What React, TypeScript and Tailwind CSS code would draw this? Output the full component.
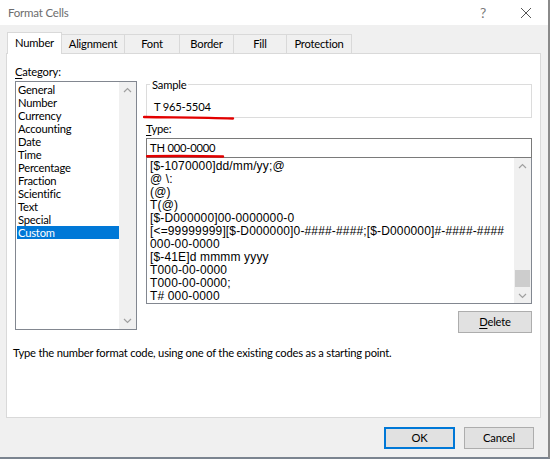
import React from 'react'

const font = { fontFamily: 'Lato, "Segoe UI", sans-serif', letterSpacing: '-0.2px' }

const tabs = ['Number', 'Alignment', 'Font', 'Border', 'Fill', 'Protection']
const tabWidths = ['w-[55px]', 'w-[63px]', 'w-[55px]', 'w-[54px]', 'w-[53px]', 'w-[65px]']

const categories = ['General', 'Number', 'Currency', 'Accounting', 'Date', 'Time', 'Percentage', 'Fraction', 'Scientific', 'Text', 'Special', 'Custom']

const codes = [
    '[$-1070000]dd/mm/yy;@',
    '@ \\:',
    '(@)',
    'T(@)',
    '[$-D000000]00-0000000-0',
    '[<=99999999][$-D000000]0-####-####;[$-D000000]#-####-####',
    '000-00-0000',
    '[$-41E]d mmmm yyyy',
    'T000-00-0000',
    'T000-00-0000;',
    'T# 000-0000',
]

const Up = () => <svg width="9" height="6" viewBox="0 0 9 6"><path d="M1 5 L4.5 1.5 L8 5" fill="none" stroke="#a0a0a0" strokeWidth="1.2" /></svg>
const Down = () => <svg width="9" height="6" viewBox="0 0 9 6"><path d="M1 1 L4.5 4.5 L8 1" fill="none" stroke="#a0a0a0" strokeWidth="1.2" /></svg>

const App = () => {
    return <div style={font} className="w-[550px] h-[459px] bg-[#f0f0f0] text-[11.2px] text-black flex flex-col border-r-2 border-[#8a8a8a] border-b-2 border-b-[#7b8490] overflow-hidden">
        {/* title bar */}
        <div className="h-[25px] bg-white flex items-center justify-between pl-[8px] pr-[16px] shrink-0">
            <span className="text-[#6d6d6d] text-[11.5px]">Format Cells</span>
            <div className="flex items-center gap-[34px] text-[#7a7a7a]">
                <span className="text-[14px] leading-none">?</span>
                <svg width="12" height="12" viewBox="0 0 12 12"><path d="M1 1 L11 11 M11 1 L1 11" stroke="#555" strokeWidth="1" /></svg>
            </div>
        </div>

        {/* tabs */}
        <div className="flex items-end pl-[7px] pt-[7px] h-[28px] shrink-0">
            {tabs.map((t, i) => i === 0
                ? <div key={t} className={`${tabWidths[i]} h-[22px] bg-white border border-b-0 border-[#d9d9d9] flex items-center justify-center relative top-[1px] z-10`}>{t}</div>
                : <div key={t} className={`${tabWidths[i]} h-[19px] bg-[#f0f0f0] border border-b-0 border-l-0 border-[#d9d9d9] flex items-center justify-center`}>{t}</div>)}
        </div>

        {/* panel */}
        <div className="mx-[6px] w-[535px] h-[365px] bg-white border border-[#d9d9d9] shrink-0 relative">
            <div className="flex pl-[8px] pt-[10px] gap-[9px]">
                {/* category */}
                <div className="flex flex-col w-[122px]">
                    <div className="h-[16px] leading-[16px]"><span className="underline underline-offset-2">C</span>ategory:</div>
                    <div className="mt-[1px] h-[249px] border border-[#828790] flex">
                        <div className="flex-1 pt-[1px] pl-[1px] flex flex-col">
                            {categories.map(c => <div key={c} className={`h-[13px] leading-[13px] pl-[1px] ${c === 'Custom' ? 'bg-[#0078d7] text-white' : ''}`}>{c}</div>)}
                        </div>
                        <div className="w-[17px] bg-[#f0f0f0] flex flex-col justify-between items-center py-[5px]">
                            <Up />
                            <Down />
                        </div>
                    </div>
                </div>

                {/* right column */}
                <div className="flex flex-col w-[386px]">
                    <div className="h-[16px]" />
                    <div className="mt-[4px] h-[34px] border border-[#dcdcdc] relative">
                        <span className="absolute -top-[7px] left-[3px] bg-white px-[2px] leading-[14px]">Sample</span>
                        <div className="pl-[7px] pt-[14px] leading-[16px]">T 965-5504</div>
                        <svg className="absolute left-[-4px] top-[30px]" width="92" height="6" viewBox="0 0 92 6"><path d="M1 2 C30 2.5, 60 2.5, 90 3.5" stroke="#e30000" strokeWidth="2.4" fill="none" strokeLinecap="round" /></svg>
                    </div>
                    <div className="mt-[4px] h-[14px] leading-[14px]"><span className="underline underline-offset-2">T</span>ype:</div>
                    <div className="mt-[2px] h-[20px] border border-[#7a7a7a] pl-[3px] leading-[18px] relative">
                        TH 000-0000
                        <svg className="absolute left-[-1px] top-[15px]" width="80" height="5" viewBox="0 0 80 5"><path d="M1 2.2 C25 1.8, 50 1.8, 77 2.5" stroke="#e30000" strokeWidth="2.4" fill="none" strokeLinecap="round" /></svg>
                    </div>
                    <div className="h-[146px] border border-t-0 border-[#828790] flex">
                        <div className="flex-1 pl-[3px] pt-[2px] flex flex-col whitespace-nowrap overflow-hidden" style={{ fontFamily: '"Liberation Sans", Arial, sans-serif', fontSize: '12px', letterSpacing: '0.15px' }}>
                            {codes.map(c => <div key={c} className="h-[13px] leading-[13px]">{c}</div>)}
                        </div>
                        <div className="w-[17px] bg-[#f0f0f0] flex flex-col items-center pt-[5px] pb-[4px]">
                            <Up />
                            <div className="flex-1" />
                            <div className="w-[15px] h-[17px] bg-[#cdcdcd] mb-[6px]" />
                            <Down />
                        </div>
                    </div>
                    <div className="flex justify-end mt-[7px]">
                        <button className="w-[74px] h-[22px] bg-[#e1e1e1] border border-[#adadad] flex items-center justify-center"><span><span className="underline underline-offset-2">D</span>elete</span></button>
                    </div>
                </div>
            </div>
            <div className="pl-[6px] mt-[12px] leading-[16px]">Type the number format code, using one of the existing codes as a starting point.</div>
        </div>

        {/* footer */}
        <div className="flex justify-end gap-[9px] pr-[14px] pt-[9px]">
            <button className="w-[71px] h-[22px] bg-[#e1e1e1] border-2 border-[#0078d7] flex items-center justify-center">OK</button>
            <button className="w-[70px] h-[22px] bg-[#e1e1e1] border border-[#adadad] flex items-center justify-center">Cancel</button>
        </div>
    </div>
}

export default App
